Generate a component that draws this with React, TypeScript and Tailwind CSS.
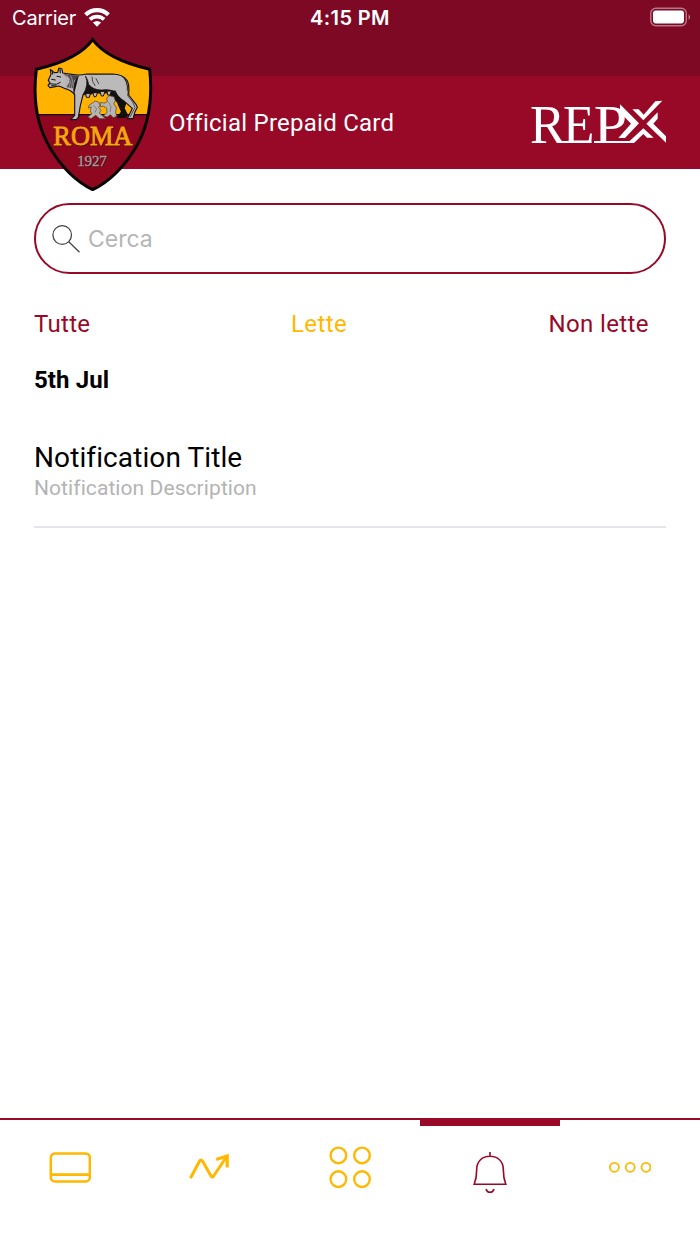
import { useState } from "react";
import type { ReactNode } from "react";
import clsx from "clsx";

type Notification = {
  title: string;
  description: string;
};

const filters = [
  { label: "Tutte", spacing: "tracking-[0.3px]" },
  { label: "Lette", spacing: "ml-[3px] tracking-[0.4px]" },
  { label: "Non lette", spacing: "tracking-[0.4px]" },
];

const notifications: Notification[] = [
  { title: "Notification Title", description: "Notification Description" },
];

function WifiIcon() {
  return (
    <svg width="26" height="20" viewBox="0 0 26 20" fill="none" stroke="white">
      <path d="M1.6 6.8C8 .6 18 .6 24.4 6.8" strokeWidth="4.2" />
      <path d="M5.9 11.4C10 7.6 16 7.6 20.1 11.4" strokeWidth="3.8" />
      <path d="M8.9 14.6Q13 11.2 17.1 14.6L13 18.8Z" fill="white" stroke="none" />
    </svg>
  );
}

function BatteryIcon() {
  return (
    <svg width="41" height="20" viewBox="0 0 41 20" fill="none">
      <rect x=".8" y="1.2" width="35.5" height="17.5" rx="5" stroke="white" strokeOpacity=".45" strokeWidth="1.4" />
      <rect x="3" y="3.6" width="31" height="12.8" rx="2.8" fill="white" />
      <path d="M38.6 7.3v5.6q3-2.8 0-5.6" fill="white" fillOpacity=".5" />
    </svg>
  );
}

function ClubCrest() {
  return (
    <svg width="120" height="154" viewBox="99 110 360 462">
      <path d="M278 117Q235 178 109 207Q92 346 150 442Q202 532 278 570Q354 532 407 442Q464 346 449 207Q322 178 278 117Z" fill="#8e071f" />
      <path d="M278 121Q235 178 111 207Q103 278 115 343H442Q455 278 447 207Q322 178 278 121Z" fill="#ffb300" />
      <path d="M114 343H443" stroke="#160307" strokeWidth="4" />
      <path d="M278 118Q235 178 109 207Q92 346 150 442Q202 530 278 568Q354 530 407 442Q464 346 449 207Q322 178 278 118Z" fill="none" stroke="#080405" strokeWidth="9" />

      {/* she-wolf */}
      <g strokeLinejoin="round" strokeLinecap="round">
        <path d="M326 272L350 280L377 308L372 324L381 342L376 351H352L365 335L352 304L330 288Z" fill="#111" stroke="#111" strokeWidth="4" />
        <path d="M153 222L151 207L163 217L173 216L177 203L186 206L188 218L220 223Q240 226 260 221Q300 222 337 221Q368 221 381 240Q389 254 386 284L408 312L412 321L405 334L399 355L382 355L397 324L373 303Q352 290 346 273Q320 279 300 272Q274 268 257 274L249 284L241 316L235 351L229 358L212 358L224 345L224 282Q211 268 193 264L177 257L150 262L144 255L150 248L145 240Z" fill="#bcb9ba" stroke="#171313" strokeWidth="3.5" />
        <path d="M190 221L236 227L222 242L218 264L200 261L208 246L206 232Z" fill="#4b4748" stroke="none" />
        <path d="M192 225Q209 240 198 258M201 225Q217 240 207 262M212 226Q222 238 213 266" fill="none" stroke="#aaa5a5" strokeWidth="2.5" />
        <path d="M236 226Q217 244 222 283M257 228Q267 254 249 283Q268 286 283 278Q316 282 347 273Q320 265 305 269Q279 269 266 252Q264 238 257 228Z" fill="#171313" stroke="#171313" strokeWidth="2" />
        <path d="M276 230Q275 244 285 256M288 235L296 250M365 228Q385 238 382 270" fill="none" stroke="#322c2c" strokeWidth="2.5" />
        <path d="M373 233Q388 260 383 286Q401 305 405 321L390 350" fill="none" stroke="#171313" strokeWidth="2" />
        <path d="M155 237L166 239M148 250L169 252L181 246M155 256L169 257M171 228L182 230" fill="none" stroke="#171313" strokeWidth="3" />
        <path d="M157 212L158 221M180 208L181 217" stroke="#171313" strokeWidth="3.5" />
        <path d="M257 280L259 291H268L271 280ZM279 278L282 289H288L292 278ZM300 274L304 287H310L315 274ZM321 273L323 284H330L334 273Z" fill="#bcb9ba" stroke="#171313" strokeWidth="3" />
      </g>

      {/* twins */}
      <g fill="#b7b4b4" stroke="#4b3b2a" strokeWidth="2" strokeLinejoin="round">
        <path d="M279 307L285 302L295 305L300 314L296 322L303 330L298 338L309 348L317 355H299L287 345L273 355L263 350L275 341L271 331L274 320L265 323L268 314Z" />
        <path d="M320 293L328 286L342 289L346 301L341 311L349 320L347 337L350 348L340 352L331 343L322 350L310 346L321 337L320 323L309 317L302 320L300 307L315 308L322 304Z" />
        <path d="M281 315L290 326L284 337M326 306L333 319L330 335" fill="none" stroke="#6b6462" />
      </g>

      <g fontFamily="'Liberation Serif', serif">
        <text x="162" y="436" fontSize="81" textLength="237" lengthAdjust="spacingAndGlyphs" fill="#30100b" stroke="#30100b">ROMA</text>
        <text x="160" y="433" fontSize="81" textLength="237" lengthAdjust="spacingAndGlyphs" fill="#f7a510" stroke="#f7a510" strokeWidth="2.5">ROMA</text>
        <text x="234" y="500" fontSize="45" textLength="88" fill="#351014">1927</text>
        <text x="232" y="498" fontSize="45" textLength="88" fill="#a59b9d" stroke="#a59b9d">1927</text>
      </g>
    </svg>
  );
}

function RepxLogo() {
  return (
    <svg width="142" height="76" viewBox="84 256 426 228" fill="white" aria-label="REPX">
      <g fontFamily="'Liberation Serif', serif" fontSize="163">
        <text x="90" y="430" textLength="106" lengthAdjust="spacingAndGlyphs">R</text>
        <text x="189" y="430" textLength="94" lengthAdjust="spacingAndGlyphs">E</text>
        <text x="281" y="430" textLength="100" lengthAdjust="spacingAndGlyphs">P</text>
      </g>
      <path d="M174 424H274V430H174ZM282 424H389L430 386L461 414H441L430 403L402 430H282Z" />
      <path d="M360 314L417 371L375 415H355L393 372L360 338Z" />
      <path d="M397 329H416L431 345L466 305L487 303L430 362Z" />
      <path d="M473 338V357L460 372L498 410V429L439 372Z" />
    </svg>
  );
}

function SearchIcon() {
  return (
    <svg width="28" height="28" viewBox="0 0 28 28" fill="none" stroke="#444" strokeWidth="1.25">
      <circle cx="10.2" cy="10" r="9.3" />
      <path d="M16.8 16.8L27.5 27.3" />
    </svg>
  );
}

function CardIcon() {
  return (
    <svg width="42" height="32" viewBox="0 0 42 32" fill="none" stroke="#ffb800">
      <rect x="1.8" y="1.4" width="39" height="28" rx="4" strokeWidth="2.5" />
      <path d="M2 22.6H40" strokeWidth="2.6" />
    </svg>
  );
}

function TrendIcon() {
  return (
    <svg width="42" height="28" viewBox="0 0 42 28" fill="none" stroke="#ffb800" strokeWidth="3">
      <path d="M2.4 26.2L11.6 9Q13 6.9 14.5 9L23 24Q24.3 25.8 25.6 24L38.7 4.5" />
      <path d="M28.2 7.5L39.2 4V15.4" strokeWidth="3.2" />
    </svg>
  );
}

function GridIcon() {
  return (
    <svg width="42" height="42" viewBox="0 0 42 42" fill="none" stroke="#ffb800" strokeWidth="2.4">
      <circle cx="9.4" cy="9.4" r="7.8" />
      <circle cx="33" cy="9.4" r="7.8" />
      <circle cx="9.4" cy="33.1" r="7.8" />
      <circle cx="33" cy="33.1" r="7.8" />
    </svg>
  );
}

function BellIcon() {
  return (
    <svg width="34" height="42" viewBox="0 0 34 42" fill="none" stroke="#980928" strokeWidth="1.6">
      <path d="M17 0V4.5M1.2 32.2Q3.7 26 3.7 17.5C3.7 9 9.5 4.3 17 4.3S30.3 9 30.3 17.5Q30.3 26 32.8 32.2Z" />
      <path d="M13 37Q14 40.3 17 40.3T21 37" />
    </svg>
  );
}

function MoreIcon() {
  return (
    <svg width="42" height="12" viewBox="0 0 42 12" fill="none" stroke="#ffb800" strokeWidth="1.8">
      <circle cx="5.4" cy="6.3" r="4.5" />
      <circle cx="21.2" cy="6.3" r="4.5" />
      <circle cx="37" cy="6.3" r="4.5" />
    </svg>
  );
}

const tabs: { name: string; icon: ReactNode; padding: string }[] = [
  { name: "Card", icon: <CardIcon />, padding: "pt-8" },
  { name: "Movements", icon: <TrendIcon />, padding: "pt-8 pr-0.5" },
  { name: "Services", icon: <GridIcon />, padding: "pt-[26px]" },
  { name: "Notifications", icon: <BellIcon />, padding: "pt-8" },
  { name: "More", icon: <MoreIcon />, padding: "pt-[41px]" },
];

export default function App() {
  const [search, setSearch] = useState("");
  const [filter, setFilter] = useState("Lette");
  const [activeTab, setActiveTab] = useState("Notifications");

  return (
    <div className="flex h-[1244px] w-[700px] flex-col overflow-hidden bg-white font-[Roboto,sans-serif] text-black [font-variant-ligatures:none]">
      <div className="flex h-[76px] items-start bg-[#7d0925] pt-1.5 pr-[9px] pl-3 font-[Inter,sans-serif] text-[20px] leading-6 text-white">
        <div className="flex flex-1 items-center gap-2">
          <span className="tracking-[-0.2px]">Carrier</span>
          <WifiIcon />
        </div>
        <span className="mr-[3px] text-center font-semibold tracking-[0.4px]">
          4:15 PM
        </span>
        <div className="flex flex-1 justify-end pt-px">
          <BatteryIcon />
        </div>
      </div>

      <header className="relative flex h-[93px] items-center justify-between bg-[#980928] pr-[30px] pl-[169px] text-white">
        <div className="absolute -top-[39px] left-[33px]">
          <ClubCrest />
        </div>
        <h1 className="text-2xl tracking-[0.25px]">Official Prepaid Card</h1>
        <RepxLogo />
      </header>

      <main className="flex grow flex-col px-[34px] pt-[34px]">
        <label className="flex h-[71px] items-center gap-2 rounded-full border-2 border-[#980928] px-4">
          <SearchIcon />
          <input
            className="grow pt-0.5 font-[Inter,sans-serif] text-[23px] outline-none placeholder:text-[#b5b5b5]"
            placeholder="Cerca"
            value={search}
            onChange={(e) => setSearch(e.target.value)}
          />
        </label>

        <div className="mt-[34px] grid h-8 grid-cols-[254px_1fr_auto] justify-items-start pr-[17px] text-2xl">
          {filters.map(({ label, spacing }) => (
            <button
              key={label}
              className={clsx(
                spacing,
                filter === label ? "text-[#ffb800]" : "text-[#980928]",
              )}
              onClick={() => setFilter(label)}
            >
              {label}
            </button>
          ))}
        </div>

        <h2 className="mt-6 text-2xl font-bold tracking-[0.1px]">5th Jul</h2>
        {notifications.map((notification) => (
          <article
            key={notification.title}
            className="mt-[42px] h-[90px] border-b-2 border-[#e3e5e8]"
          >
            <h3 className="text-[28px] leading-10 tracking-[0.1px]">
              {notification.title}
            </h3>
            <p className="-mt-0.5 text-[21px] leading-6 tracking-[0.08px] text-[#b3b3b3]">
              {notification.description}
            </p>
          </article>
        ))}
      </main>

      <nav className="grid h-[126px] grid-cols-5 border-t-2 border-[#980928]">
        {tabs.map(({ name, icon, padding }) => (
          <button
            key={name}
            aria-label={name}
            className={clsx("relative flex items-start justify-center", padding)}
            onClick={() => setActiveTab(name)}
          >
            {activeTab === name && (
              <span className="absolute inset-x-0 top-0 h-1.5 bg-[#980928]" />
            )}
            {icon}
          </button>
        ))}
      </nav>
    </div>
  );
}
